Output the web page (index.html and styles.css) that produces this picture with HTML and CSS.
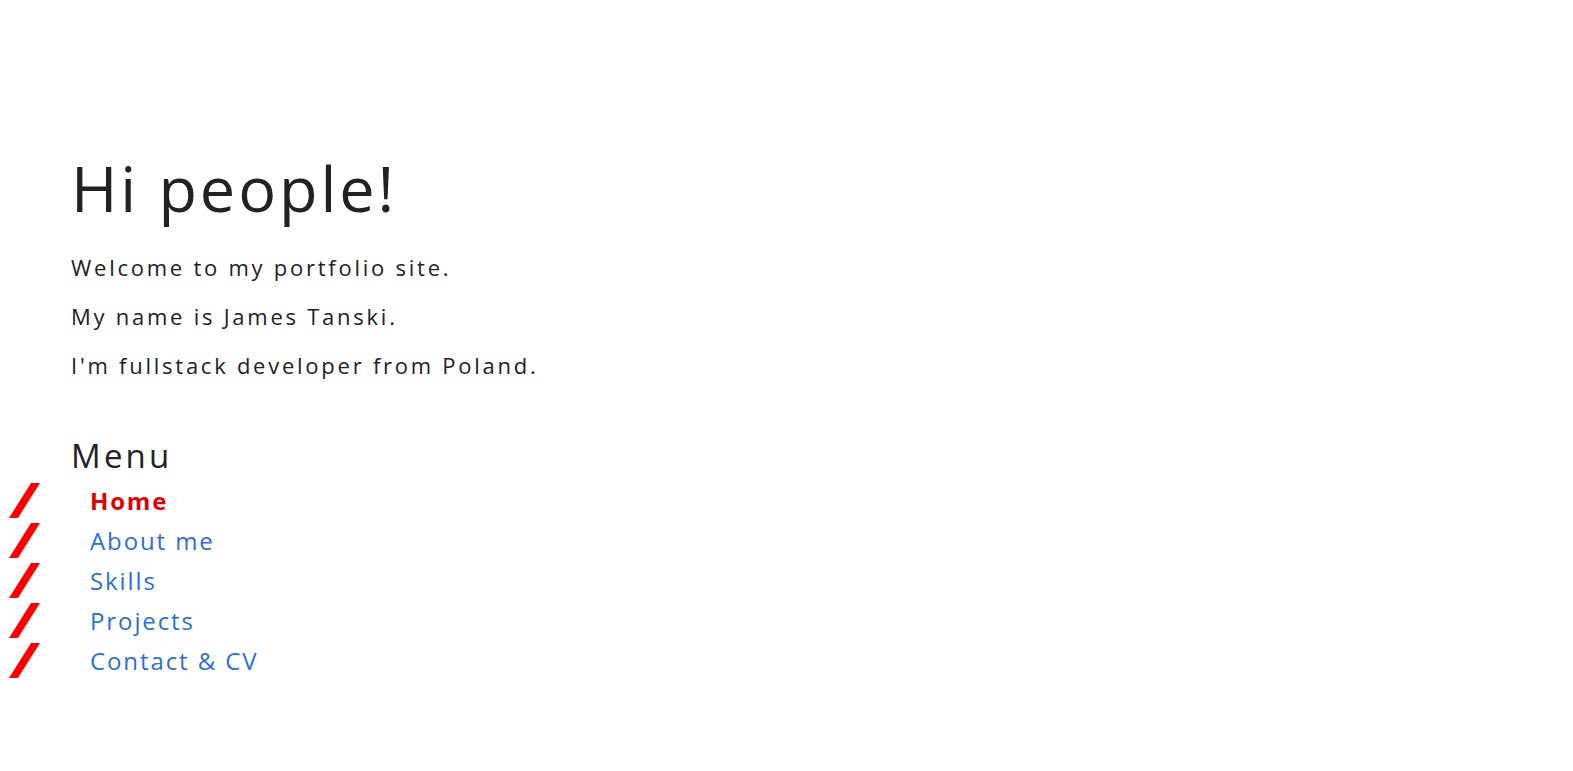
FILE: index.html
```html
<!DOCTYPE html>
<html lang="en">
<head>
<meta charset="utf-8">
<title>James Tanski</title>
<link rel="stylesheet" href="styles.css">
</head>
<body>
<main class="page">
  <section class="intro">
    <h1 class="title">Hi people!</h1>
    <p class="lead">Welcome to my portfolio site.</p>
    <p class="lead">My name is James Tanski.</p>
    <p class="lead">I'm fullstack developer from Poland.</p>
  </section>
  <nav class="menu">
    <h2 class="menu-title">Menu</h2>
    <ul class="menu-list">
      <li class="menu-item"><a class="menu-link is-active" href="#">Home</a></li>
      <li class="menu-item"><a class="menu-link" href="#">About me</a></li>
      <li class="menu-item"><a class="menu-link" href="#">Skills</a></li>
      <li class="menu-item"><a class="menu-link" href="#">Projects</a></li>
      <li class="menu-item"><a class="menu-link" href="#">Contact &amp; CV</a></li>
    </ul>
  </nav>
</main>
</body>
</html>
```
FILE: styles.css
```css
html, body {
  margin: 0;
  padding: 0;
  background: #ffffff;
}
body {
  font-family: "Open Sans", "Noto Sans", sans-serif;
  color: #222222;
}
.page {
  padding: 150px 0 0 0;
}
.intro {
  padding-left: 71px;
}
.title {
  margin: 0;
  font-size: 63px;
  font-weight: 400;
  line-height: 76px;
  letter-spacing: 2.9px;
  color: #222222;
}
.lead {
  margin: 0;
  font-size: 22px;
  line-height: 49px;
  letter-spacing: 2.75px;
  color: #222222;
}
.lead:first-of-type {
  margin-top: 17px;
}
.menu {
  margin-top: 46px;
}
.menu-title {
  margin: 0 0 0 71px;
  font-size: 33px;
  font-weight: 400;
  line-height: 40px;
  letter-spacing: 3.2px;
  color: #222222;
}
.menu-list {
  list-style: none;
  margin: 7px 0 0 0;
  padding: 0 0 0 9px;
  display: flex;
  flex-direction: column;
  gap: 5px;
}
.menu-item {
  display: flex;
  align-items: center;
  height: 35px;
}
.menu-item::before {
  content: "";
  width: 31px;
  height: 35px;
  margin-right: 50px;
  background: #ff0000;
  clip-path: polygon(71% 0, 100% 0, 29% 100%, 0 100%);
  flex: none;
}
.menu-link {
  font-size: 24px;
  letter-spacing: 1.9px;
  color: #2d6fd1;
  text-decoration: none;
}
.menu-link.is-active {
  color: #e00000;
  font-weight: 700;
  letter-spacing: 1.8px;
}
```
